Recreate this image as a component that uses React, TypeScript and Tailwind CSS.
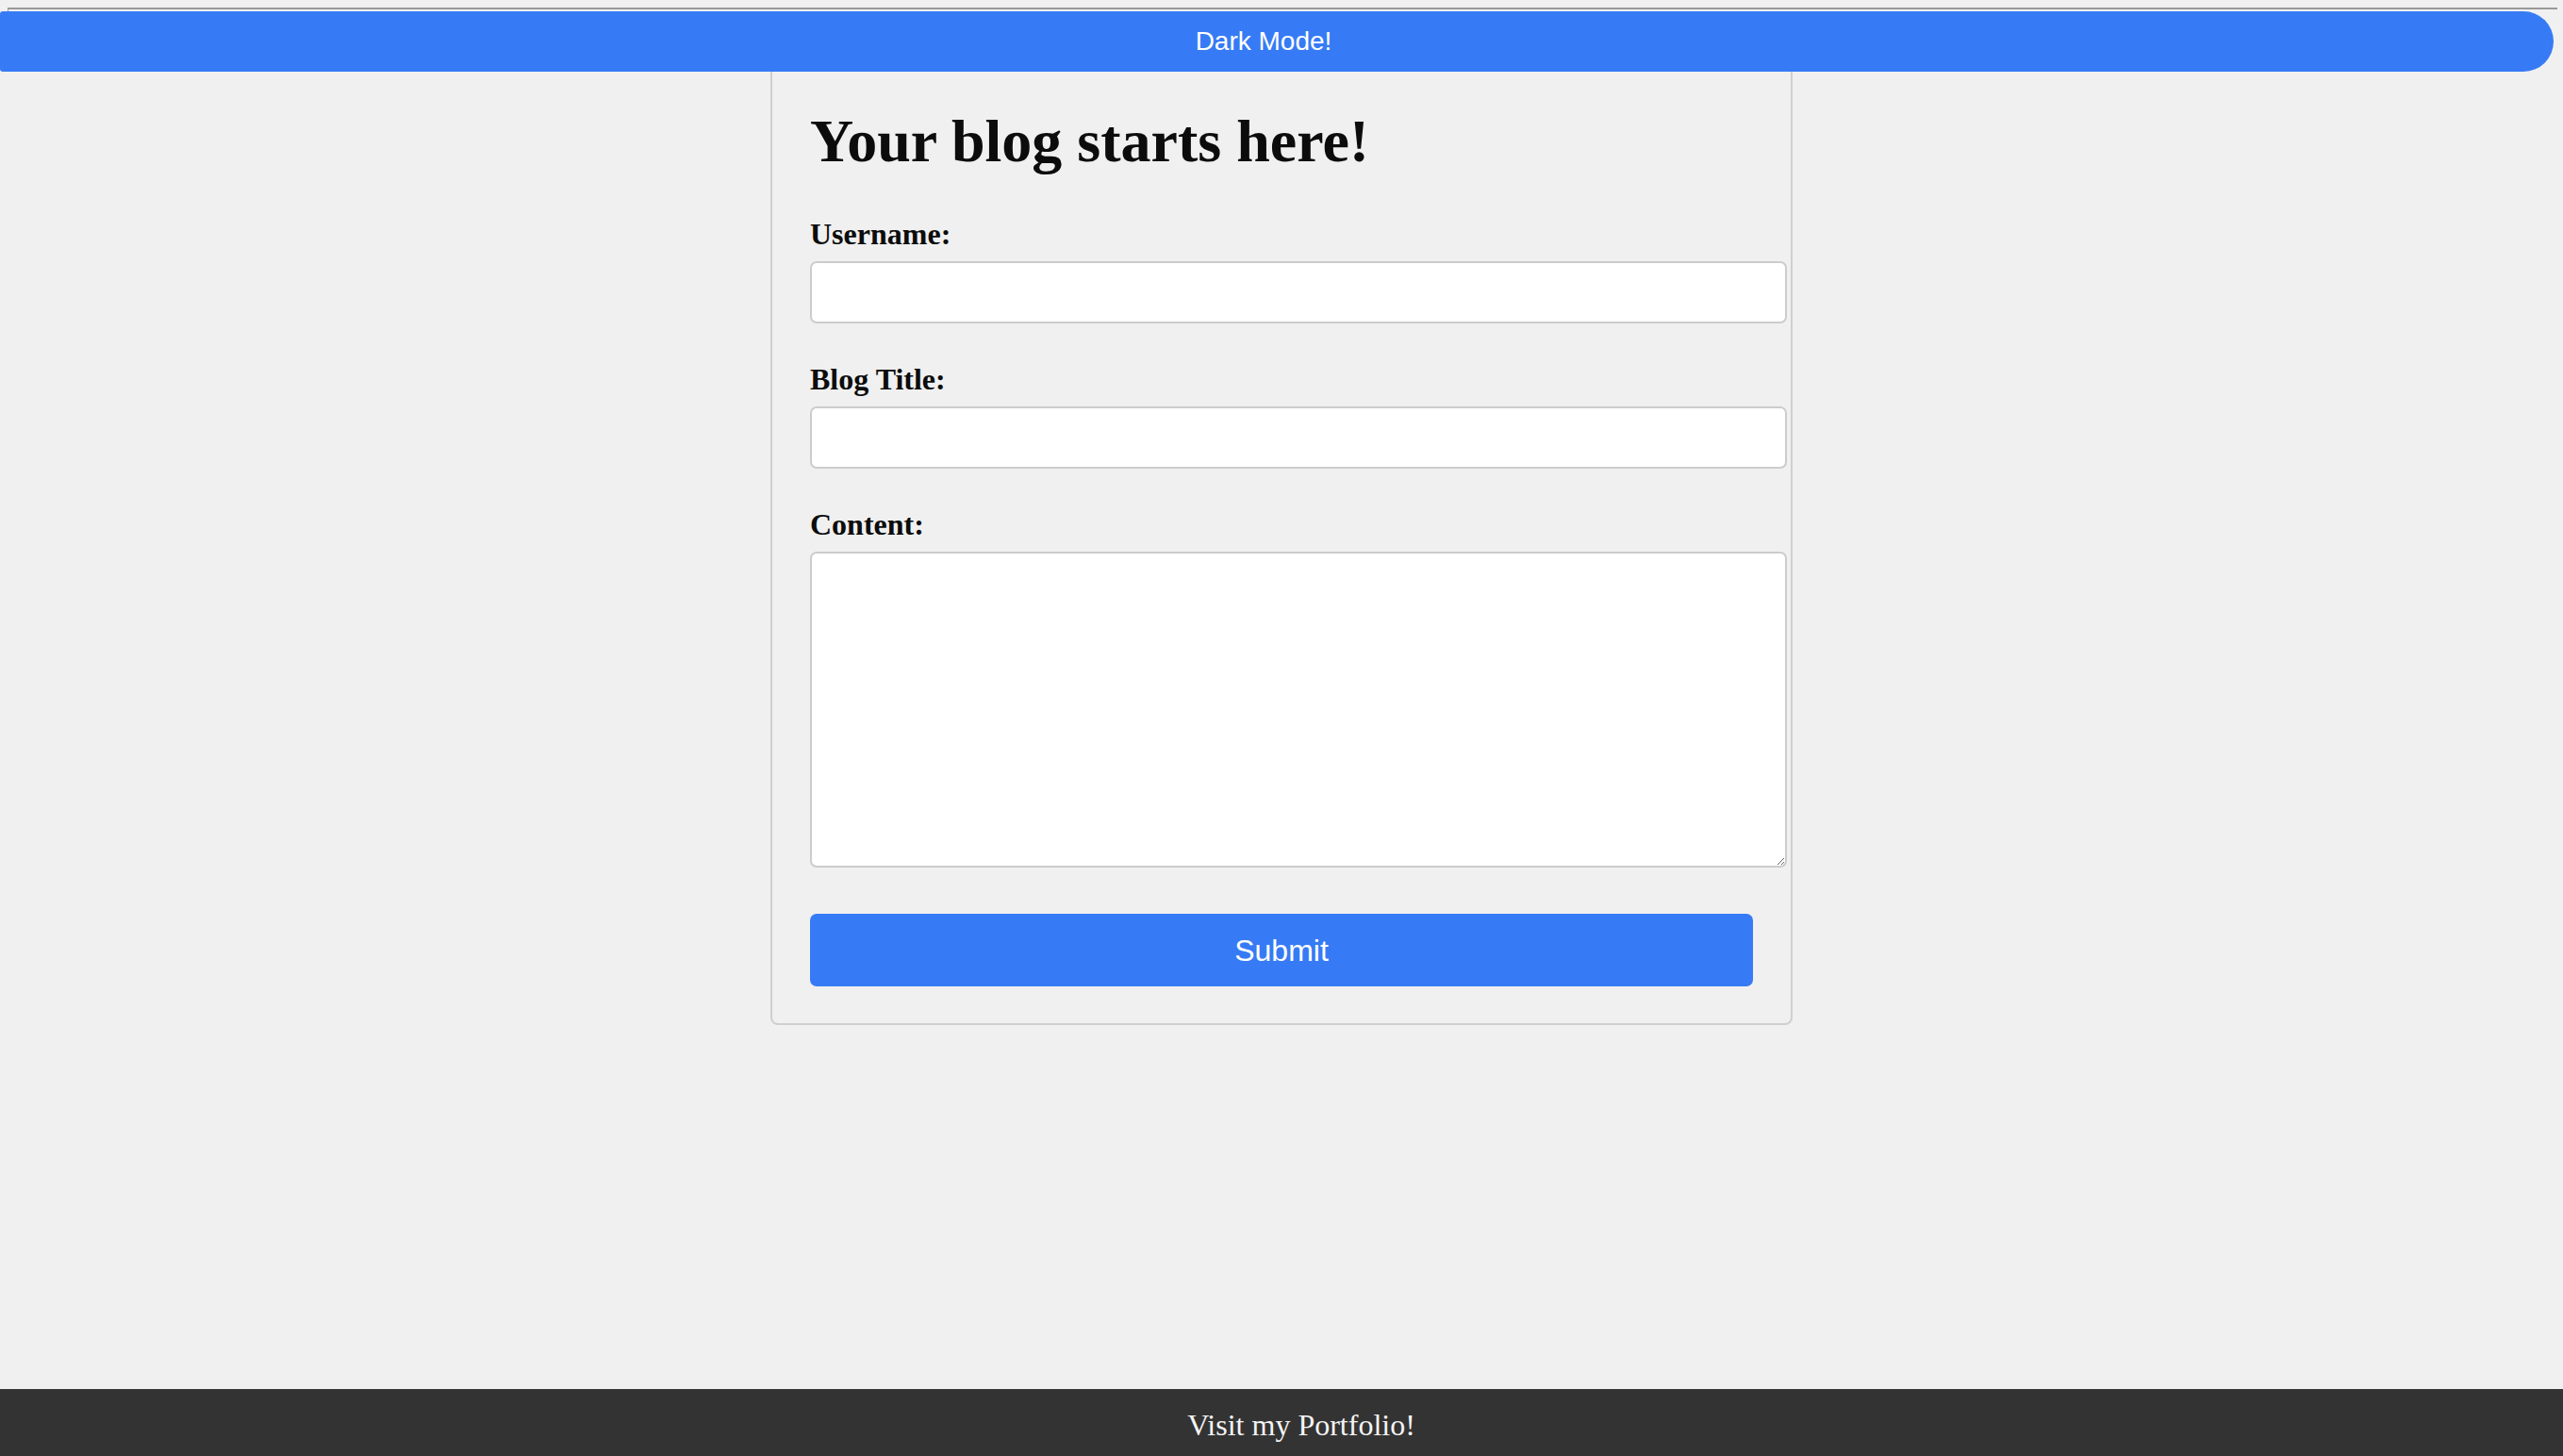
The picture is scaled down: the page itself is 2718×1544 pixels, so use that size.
export default function App() {
  return (
    <div className="flex min-h-screen flex-col bg-[#f0f0f0] font-['Liberation_Serif',serif] text-[#0c0c0c]">
      <div className="pt-[8px]">
        <div className="ml-[8px] h-[4px] w-[2704px] border-l border-t-2 border-[#999]" />
        <button
          type="button"
          className="flex h-[64px] w-[2708px] items-center justify-center rounded-l-[3px] rounded-r-[32px] bg-[#367bf5] pr-[28px] font-['Liberation_Sans',sans-serif] text-[28px] text-white"
        >
          Dark Mode!
        </button>
      </div>

      <div className="mx-auto w-[1084px] rounded-b-[8px] border-2 border-t-0 border-[#cfcfcf] px-[40px] pb-[39px] pt-[38px]">
        <h1 className="mb-[44px] text-[64px] font-bold leading-[72px]">Your blog starts here!</h1>

        <div className="mb-[41px]">
          <label className="mb-[11px] block text-[32px] font-bold leading-[36px]">Username:</label>
          <input
            type="text"
            className="block h-[66px] w-[1036px] rounded-[7px] border-2 border-[#ccc] bg-white px-[16px]"
          />
        </div>

        <div className="mb-[41px]">
          <label className="mb-[11px] block text-[32px] font-bold leading-[36px]">Blog Title:</label>
          <input
            type="text"
            className="block h-[66px] w-[1036px] rounded-[7px] border-2 border-[#ccc] bg-white px-[16px]"
          />
        </div>

        <div className="mb-[49px]">
          <label className="mb-[11px] block text-[32px] font-bold leading-[36px]">Content:</label>
          <textarea className="block h-[335px] w-[1036px] resize-y rounded-[7px] border-2 border-[#ccc] bg-white p-[16px]" />
        </div>

        <button
          type="submit"
          className="h-[77px] w-full rounded-[7px] bg-[#367bf5] font-['Liberation_Sans',sans-serif] text-[32px] text-white"
        >
          Submit
        </button>
      </div>

      <footer className="mt-auto flex h-[71px] items-center justify-center bg-[#333] pl-[42px] pt-[4px] text-[32px] text-[#f4f4f4]">
        Visit my Portfolio!
      </footer>
    </div>
  );
}
